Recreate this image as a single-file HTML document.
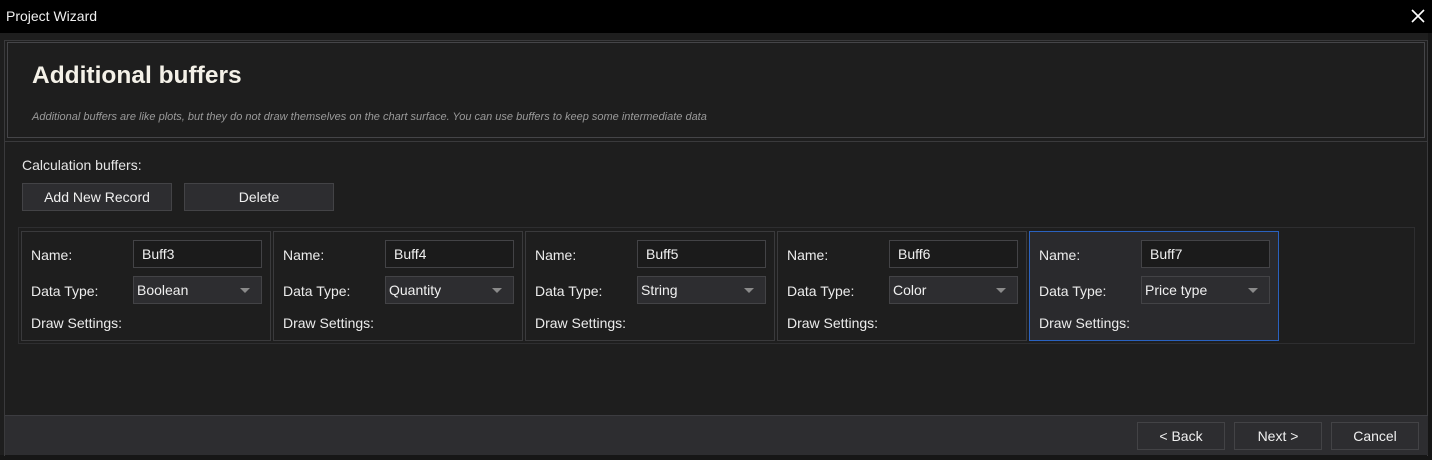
<!DOCTYPE html>
<html><head><style>
*{box-sizing:border-box;margin:0;padding:0}
body{width:1432px;height:460px;background:#1e1e1e;font-family:"Liberation Sans",sans-serif;color:#e6e6e6;position:relative;overflow:hidden;font-size:14px}
.a{position:absolute}
.title{left:0;top:0;width:1432px;height:33px;background:#000;}
.title span{position:absolute;left:6px;top:8px;font-size:14px;color:#f0f0f0}
.btn{position:absolute;background:#2d2d30;border:1px solid #434346;color:#f0f0f0;text-align:center;font-size:14px;line-height:27px}
.card{position:absolute;top:231px;width:250px;height:110px;border:1px solid #3a3a3c;background:#1e1e1e}
.card.sel{background:#2a2a2d;border-color:#2a62c0}
.lb{position:absolute;left:9px;font-size:14px;color:#ececec}
.in{position:absolute;left:111px;width:129px;height:28px;border:1px solid #434346;background:#1b1b1b;font-size:14px;padding-left:8px;line-height:27px;color:#f0f0f0}
.cb{background:#2d2d30;padding-left:3px}
.cb:after{content:"";position:absolute;right:11px;top:11px;border-left:5px solid transparent;border-right:5px solid transparent;border-top:5px solid #8a8a8a}
</style></head><body>
<div class="a title"><span>Project Wizard</span>
<svg class="a" style="left:1411px;top:9px" width="14" height="14"><path d="M1 1L13 13M13 1L1 13" stroke="#fff" stroke-width="1.6"/></svg></div>
<div class="a" style="left:1428px;top:33px;width:4px;height:427px;background:#161616"></div>
<div class="a" style="left:0;top:455px;width:1432px;height:5px;background:#161616"></div>
<div class="a" style="left:4px;top:40px;width:1424px;height:416px;border:1px solid #3a3a3c;border-bottom:none"></div>
<div class="a" style="left:7px;top:42px;width:1418px;height:96px;border:1px solid #454548"></div>
<div class="a" style="left:5px;top:141px;width:1422px;height:1px;background:#3a3a3c"></div>
<div class="a" style="left:32px;top:62px;font-size:24.5px;font-weight:bold;color:#f4f1e8">Additional buffers</div>
<div class="a" style="left:32px;top:111px;font-size:11px;font-style:italic;color:#9a9a9a">Additional buffers are like plots, but they do not draw themselves on the chart surface. You can use buffers to keep some intermediate data</div>
<div class="a" style="left:22px;top:157px;font-size:14px">Calculation buffers:</div>
<div class="btn" style="left:22px;top:183px;width:150px;height:28px">Add New Record</div>
<div class="btn" style="left:184px;top:183px;width:150px;height:28px">Delete</div>
<div class="a" style="left:18px;top:227px;width:1397px;height:117px;border:1px solid #2e2e30"></div>

<div class="card" style="left:21px"><div class="lb" style="top:15px">Name:</div><div class="in" style="top:8px">Buff3</div><div class="lb" style="top:51px">Data Type:</div><div class="in cb" style="top:44px">Boolean</div><div class="lb" style="top:83px">Draw Settings:</div></div>
<div class="card" style="left:273px"><div class="lb" style="top:15px">Name:</div><div class="in" style="top:8px">Buff4</div><div class="lb" style="top:51px">Data Type:</div><div class="in cb" style="top:44px">Quantity</div><div class="lb" style="top:83px">Draw Settings:</div></div>
<div class="card" style="left:525px"><div class="lb" style="top:15px">Name:</div><div class="in" style="top:8px">Buff5</div><div class="lb" style="top:51px">Data Type:</div><div class="in cb" style="top:44px">String</div><div class="lb" style="top:83px">Draw Settings:</div></div>
<div class="card" style="left:777px"><div class="lb" style="top:15px">Name:</div><div class="in" style="top:8px">Buff6</div><div class="lb" style="top:51px">Data Type:</div><div class="in cb" style="top:44px">Color</div><div class="lb" style="top:83px">Draw Settings:</div></div>
<div class="card sel" style="left:1029px"><div class="lb" style="top:15px">Name:</div><div class="in" style="top:8px">Buff7</div><div class="lb" style="top:51px">Data Type:</div><div class="in cb" style="top:44px">Price type</div><div class="lb" style="top:83px">Draw Settings:</div></div>

<div class="a" style="left:5px;top:415px;width:1423px;height:40px;background:#2d2d30;border-top:1px solid #3c3c40"></div>
<div class="btn" style="left:1137px;top:422px;width:88px;height:28px">&lt; Back</div>
<div class="btn" style="left:1234px;top:422px;width:88px;height:28px">Next &gt;</div>
<div class="btn" style="left:1331px;top:422px;width:88px;height:28px">Cancel</div>
</body></html>
